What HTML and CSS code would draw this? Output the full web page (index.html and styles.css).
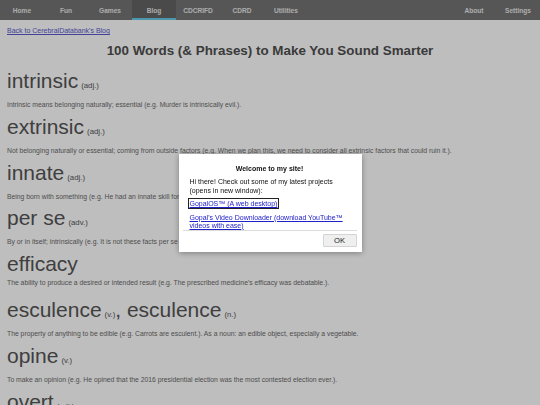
FILE: index.html
```html
<!DOCTYPE html>
<html>
<head>
<meta charset="utf-8">
<title>100 Words</title>
<link rel="stylesheet" href="styles.css">
</head>
<body>
<nav class="nav">
  <div class="nav-left">
    <a class="nav-item">Home</a>
    <a class="nav-item">Fun</a>
    <a class="nav-item">Games</a>
    <a class="nav-item active">Blog</a>
    <a class="nav-item">CDCRIFD</a>
    <a class="nav-item">CDRD</a>
    <a class="nav-item">Utilities</a>
  </div>
  <div class="nav-right">
    <a class="nav-item">About</a>
    <a class="nav-item">Settings</a>
  </div>
</nav>
<main class="content">
  <a class="back" href="#">Back to CerebralDatabank's Blog</a>
  <h1 class="title">100 Words (&amp; Phrases) to Make You Sound Smarter</h1>

  <div class="entry">
    <div class="word">intrinsic<span class="pos">(adj.)</span></div>
    <p class="desc">Intrinsic means belonging naturally; essential (e.g. Murder is intrinsically evil.).</p>
  </div>
  <div class="entry">
    <div class="word">extrinsic<span class="pos">(adj.)</span></div>
    <p class="desc">Not belonging naturally or essential; coming from outside factors (e.g. When we plan this, we need to consider all extrinsic factors that could ruin it.).</p>
  </div>
  <div class="entry">
    <div class="word">innate<span class="pos">(adj.)</span></div>
    <p class="desc">Being born with something (e.g. He had an innate skill for music.).</p>
  </div>
  <div class="entry">
    <div class="word">per se<span class="pos">(adv.)</span></div>
    <p class="desc">By or in itself; intrinsically (e.g. It is not these facts per se that matter.).</p>
  </div>
  <div class="entry">
    <div class="word">efficacy</div>
    <p class="desc">The ability to produce a desired or intended result (e.g. The prescribed medicine's efficacy was debatable.).</p>
  </div>
  <div class="entry">
    <div class="word">esculence<span class="pos">(v.)</span>, esculence<span class="pos">(n.)</span></div>
    <p class="desc">The property of anything to be edible (e.g. Carrots are esculent.). As a noun: an edible object, especially a vegetable.</p>
  </div>
  <div class="entry">
    <div class="word">opine<span class="pos">(v.)</span></div>
    <p class="desc">To make an opinion (e.g. He opined that the 2016 presidential election was the most contested election ever.).</p>
  </div>
  <div class="entry last">
    <div class="word">overt<span class="pos">(adj.)</span></div>
  </div>
</main>

<div class="overlay">
  <div class="dialog">
    <div class="dialog-body">
      <div class="dialog-title">Welcome to my site!</div>
      <p class="dialog-text">Hi there! Check out some of my latest projects (opens in new window):</p>
      <p class="dialog-link-row"><a class="dialog-link focused" href="#">GopalOS™ (A web desktop)</a></p>
      <p class="dialog-link-row"><a class="dialog-link" href="#">Gopal's Video Downloader (download YouTube™ videos with ease)</a></p>
    </div>
    <div class="dialog-actions">
      <button class="ok">OK</button>
    </div>
  </div>
</div>
</body>
</html>
```
FILE: styles.css
```css
html, body {
  margin: 0;
  padding: 0;
  height: 100%;
  overflow: hidden;
}
body {
  background: #ffffff;
  font-family: "Liberation Sans", Arial, sans-serif;
  color: #555;
}
.nav {
  display: flex;
  justify-content: space-between;
  height: 20px;
  background: #747474;
}
.nav-left, .nav-right {
  display: flex;
}
.nav-item {
  width: 44px;
  height: 20px;
  box-sizing: border-box;
  display: flex;
  align-items: center;
  justify-content: center;
  font-size: 6.6px;
  font-weight: bold;
  color: #e6e6e6;
  white-space: nowrap;
}
.nav-item.active {
  background: #646464;
  border-bottom: 2px solid #66cbe6;
  padding-top: 2px;
}
.content {
  padding: 6px 7px 0;
}
.back {
  display: block;
  font-size: 7px;
  line-height: 10px;
  color: #5a5ad0;
  text-decoration: underline;
}
.title {
  margin: 7px 0 9px;
  text-align: center;
  font-size: 13.4px;
  line-height: 16px;
  font-weight: bold;
  color: #4f4f4f;
}
.entry {
  height: 45.8px;
}
.entry.last {
  height: 25px;
}
.word {
  font-size: 21px;
  line-height: 25px;
  color: #555;
  white-space: nowrap;
}
.pos {
  font-size: 7.8px;
  margin-left: 3px;
}
.desc {
  margin: 3px 0 0;
  font-size: 6.8px;
  line-height: 8px;
  color: #6a6a6a;
  white-space: nowrap;
}
.overlay {
  position: fixed;
  inset: 0;
  background: rgba(0, 0, 0, 0.253);
  display: flex;
  align-items: center;
  justify-content: center;
}
.dialog {
  width: 183px;
  height: 98px;
  box-sizing: border-box;
  background: #fff;
  box-shadow: 0 1px 6px rgba(0, 0, 0, 0.35);
  padding: 0 5px 4px 4px;
  display: flex;
  flex-direction: column;
}
.dialog-body {
  height: 77px;
  box-sizing: border-box;
  overflow: hidden;
  padding: 10px 7px 0;
  border-bottom: 1px solid #dcdcdc;
  font-size: 7px;
  color: #111;
}
.dialog-title {
  text-align: center;
  font-weight: bold;
  line-height: 10px;
  margin-bottom: 4.5px;
}
.dialog-text {
  margin: 0 0 5px;
  line-height: 8.5px;
}
.dialog-link-row {
  margin: 0 0 5.5px;
  line-height: 8px;
}
.dialog-link {
  color: #2020c8;
  text-decoration: underline;
}
.dialog-link.focused {
  outline: 1px solid #222;
  outline-offset: 1px;
}
.dialog-actions {
  display: flex;
  justify-content: flex-end;
  padding-top: 3px;
}
.ok {
  width: 34px;
  height: 13px;
  padding: 0;
  border: 1px solid #d4d4d4;
  background: #efefef;
  border-radius: 1px;
  font-family: "Liberation Sans", Arial, sans-serif;
  font-size: 7.6px;
  color: #222;
}
```
